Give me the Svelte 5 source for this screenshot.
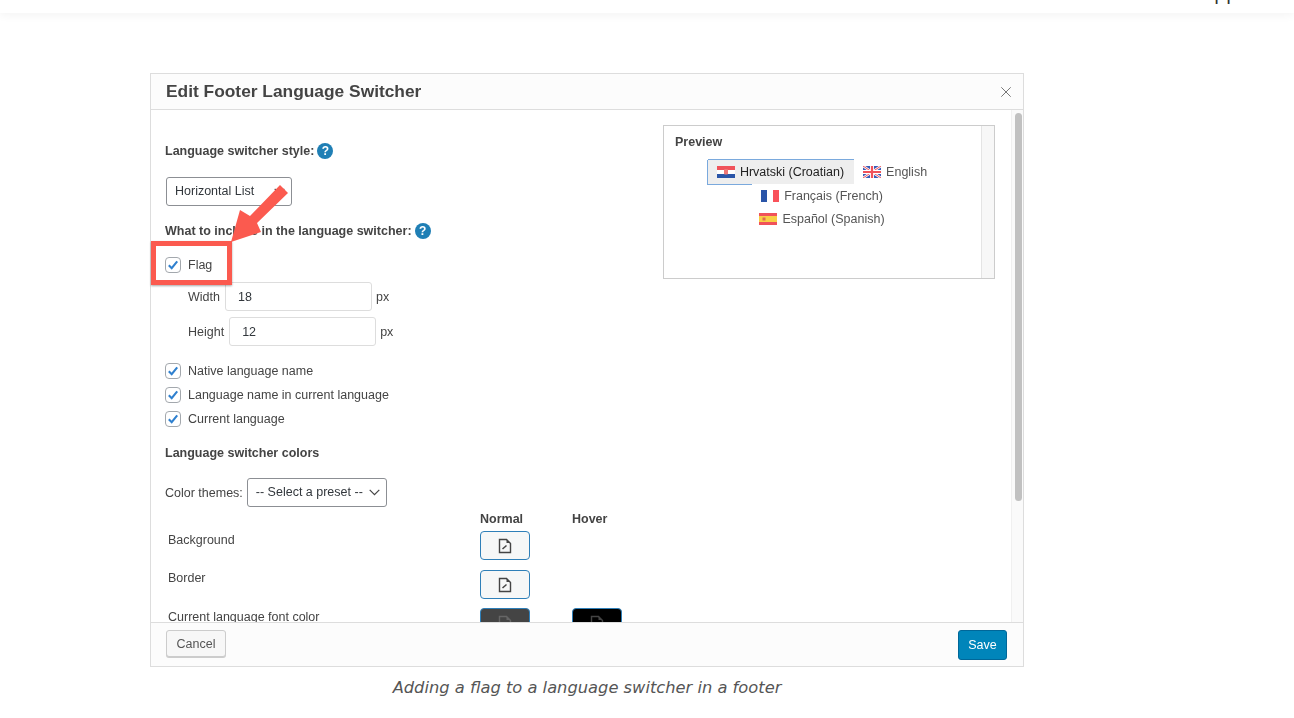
<script>
  const checks = ['Native language name', 'Language name in current language', 'Current language'];
</script>

{#snippet check()}
  <svg class="check" width="16" height="16" viewBox="0 0 16 16" aria-hidden="true">
    <rect x="0.5" y="0.5" width="15" height="15" rx="3.5" fill="#fff" stroke="#a3a8ad" />
    <path d="M3.8 8.2 L6.7 11.2 L12.2 4.4" fill="none" stroke="#2f80cf" stroke-width="2.1" />
  </svg>
{/snippet}

{#snippet help()}
  <span class="help">?</span>
{/snippet}

{#snippet chevron()}
  <svg class="chev" width="11" height="7" viewBox="0 0 11 7" aria-hidden="true">
    <path d="M0.7 0.8 L5.5 5.6 L10.3 0.8" fill="none" stroke="#444" stroke-width="1.2" />
  </svg>
{/snippet}

{#snippet doc(color)}
  <svg width="14" height="16" viewBox="0 0 14 16" aria-hidden="true">
    <path d="M1.5 1.5 H8.5 L12.5 5.5 V14.5 H1.5 Z" fill="none" stroke={color} stroke-width="1.4" />
    <path d="M8.5 1.5 V5 H12.5 Z" fill={color} />
    <path d="M4.5 11 L8.5 7.5" stroke={color} stroke-width="1.5" />
  </svg>
{/snippet}

<header class="topbar"><span class="clipped">Support</span></header>

<main class="page">
  <figure class="figure">
    <section class="modal">
      <div class="head">
        <h2>Edit Footer Language Switcher</h2>
        <svg class="close" width="10" height="10" viewBox="0 0 10 10" aria-hidden="true">
          <path d="M0.3 0.3 L9.7 9.7 M9.7 0.3 L0.3 9.7" stroke="#777" stroke-width="1" />
        </svg>
      </div>

      <div class="body">
        <div class="content">
          <div class="left">
            <div class="title first">Language switcher style: {@render help()}</div>
            <span class="sel-wrap style">
              <select class="sel"><option>Horizontal List</option></select>
              {@render chevron()}
            </span>
            <div class="title include">What to include in the language switcher: {@render help()}</div>

            <div class="check-row flag">{@render check()}<span>Flag</span></div>
            <div class="size-row"><span>Width</span><input value="18" /><span>px</span></div>
            <div class="size-row second"><span>Height</span><input value="12" /><span>px</span></div>

            <div class="checks">
              {#each checks as c}
                <div class="check-row">{@render check()}<span>{c}</span></div>
              {/each}
            </div>

            <div class="title colors">Language switcher colors</div>
            <div class="themes">
              <span>Color themes:</span>
              <span class="sel-wrap preset">
                <select class="sel"><option>-- Select a preset --</option></select>
                {@render chevron()}
              </span>
            </div>

            <div class="table">
              <span></span><b>Normal</b><b>Hover</b>
              <span class="name low">Background</span>
              <button class="swatch">{@render doc('#444')}</button><span></span>
              <span class="name">Border</span>
              <button class="swatch">{@render doc('#444')}</button><span></span>
              <span class="name low">Current language font color</span>
              <button class="swatch dark">{@render doc('#666')}</button>
              <button class="swatch black">{@render doc('#444')}</button>
            </div>
          </div>

          <aside class="preview">
            <div class="preview-main">
              <div class="preview-title">Preview</div>
              <div class="langs">
                <div class="lang-line first-line">
                  <span class="lang current">
                    <svg class="flag-i" width="18" height="12" viewBox="0 0 18 12" aria-hidden="true">
                      <rect width="18" height="4" fill="#f0525a" /><rect y="4" width="18" height="4" fill="#fff" /><rect y="8" width="18" height="4" fill="#2a55a8" />
                      <rect x="7" y="3" width="4" height="5.5" rx="1" fill="#e77" />
                    </svg>
                    Hrvatski (Croatian)
                  </span>
                  <span class="lang english">
                    <svg class="flag-i" width="18" height="12" viewBox="0 0 18 12" aria-hidden="true">
                      <rect width="18" height="12" fill="#3b5bb5" />
                      <path d="M0 0 L18 12 M18 0 L0 12" stroke="#fff" stroke-width="2.4" />
                      <path d="M0 0 L18 12 M18 0 L0 12" stroke="#f0525a" stroke-width="1" />
                      <path d="M9 0 V12 M0 6 H18" stroke="#fff" stroke-width="4" />
                      <path d="M9 0 V12 M0 6 H18" stroke="#f0525a" stroke-width="2.2" />
                    </svg>
                    English
                  </span>
                </div>
                <div class="lang-line">
                  <span class="lang">
                    <svg class="flag-i" width="18" height="12" viewBox="0 0 18 12" aria-hidden="true">
                      <rect width="6" height="12" fill="#2a55a8" /><rect x="6" width="6" height="12" fill="#fff" /><rect x="12" width="6" height="12" fill="#f9525a" />
                    </svg>
                    Français (French)
                  </span>
                </div>
                <div class="lang-line last-line">
                  <span class="lang">
                    <svg class="flag-i" width="18" height="12" viewBox="0 0 18 12" aria-hidden="true">
                      <rect width="18" height="12" fill="#f0525a" /><rect y="3" width="18" height="6" fill="#f8cf45" />
                      <rect x="3.5" y="4.5" width="3" height="3" fill="#e06a50" />
                    </svg>
                    Español (Spanish)
                  </span>
                </div>
              </div>
            </div>
            <div class="preview-side"></div>
          </aside>
        </div>

        <div class="track"><div class="thumb"></div></div>
      </div>

      <div class="foot">
        <button class="cancel">Cancel</button>
        <button class="save">Save</button>
      </div>

      <div class="callout" aria-hidden="true"></div>
      <svg class="arrow" width="70" height="70" viewBox="0 0 70 70" aria-hidden="true">
        <path d="M55 5 L63 13 L32 43 L36 52 L6 62 L15 30 L25 36 Z" fill="#fb5a4f" />
      </svg>
    </section>
    <figcaption>Adding a flag to a language switcher in a footer</figcaption>
  </figure>
</main>

<style>
  :global(body) {
    margin: 0;
    background: #fff;
    font-family: "Liberation Sans", Arial, sans-serif;
    overflow: hidden;
  }
  .topbar {
    height: 13px;
    overflow: hidden;
    box-shadow: 0 3px 8px rgba(0, 0, 0, 0.045);
    display: flex;
    justify-content: flex-end;
    padding-right: 29px;
  }
  .clipped {
    font: 19px/20px "DejaVu Sans", sans-serif;
    color: #333;
    margin-top: -17px;
    height: 24px;
  }
  .page { padding: 60px 0 0 150px; }
  .figure { margin: 0; width: 874px; }
  .modal {
    position: relative;
    box-sizing: border-box;
    width: 874px;
    height: 594px;
    border: 1px solid #ddd;
    display: flex;
    flex-direction: column;
    color: #444;
    font-size: 12.5px;
    filter: blur(0.4px);
  }
  .head {
    height: 35px;
    flex: none;
    background: #fcfcfc;
    border-bottom: 1px solid #ddd;
    display: flex;
    align-items: center;
    justify-content: space-between;
    padding: 0 12px 0 15px;
  }
  h2 { margin: 0; font-size: 17.35px; font-weight: 700; color: #444; }
  .body { flex: 1; min-height: 0; display: flex; overflow: hidden; background: #fff; }
  .content { flex: 1; display: flex; justify-content: space-between; padding: 15px 16px 0 14px; min-width: 0; }
  .left { width: 480px; flex: none; }
  .title { font-weight: 700; display: flex; align-items: center; gap: 3px; line-height: 16px; }
  .first { margin-top: 18px; }
  .help {
    width: 16px; height: 16px; border-radius: 50%;
    background: #1f7fb5; color: #fff; font-size: 12px; font-weight: 700;
    display: inline-flex; align-items: center; justify-content: center;
  }
  .sel-wrap { position: relative; display: block; }
  .chev { position: absolute; right: 7px; top: 11px; pointer-events: none; }
  .sel {
    appearance: none;
    display: block;
    width: 100%;
    font: 12.5px "Liberation Sans", sans-serif;
    color: #32373c;
    background-color: #fff;
    border: 1px solid #8c8f94;
    border-radius: 3px;
    height: 29px;
    box-sizing: border-box;
    padding: 0 4px 2px 8px;
  }
  .style { width: 126px; margin: 18px 0 0 1px; }
  .include { margin-top: 17px; }
  .check-row { display: flex; align-items: center; gap: 7px; height: 24px; }
  .check { flex: none; }
  .flag { margin-top: 14px; }
  .size-row { display: flex; align-items: center; gap: 5px; padding-left: 23px; margin-top: 5px; height: 29px; }
  .size-row.second { margin-top: 6px; }
  .size-row input {
    width: 147px; height: 29px; box-sizing: border-box;
    border: 1px solid #ddd; border-radius: 3px; padding: 0 12px;
    font: 12.5px "Liberation Sans", sans-serif; color: #32373c; outline: none;
  }
  .size-row span:last-child { margin-left: -1px; }
  .checks { margin-top: 13px; }
  .colors { margin-top: 14px; }
  .themes { display: flex; align-items: center; gap: 4px; margin-top: 17px; }
  .preset { width: 140px; }
  .table {
    display: grid;
    grid-template-columns: 312px 92px 92px;
    grid-template-rows: 23px 39px 38px 30px;
    padding-left: 3px;
    margin-top: 1px;
    height: 115px;
    overflow: hidden;
  }
  .table b { line-height: 22px; }
  .name { line-height: 16px; }
  .name.low { padding-top: 1px; }
  .swatch {
    width: 50px; height: 29px; padding: 0;
    background: #f6f7f7;
    border: 1px solid #2f7fb8;
    border-radius: 4px;
    display: flex; align-items: center; justify-content: center;
  }
  .dark { background: #444; }
  .black { background: #000; }

  .preview {
    box-sizing: border-box;
    width: 332px;
    height: 154px;
    border: 1px solid #ccc;
    display: flex;
    align-self: flex-start;
  }
  .preview-main { flex: 1; }
  .preview-title { font-weight: 700; padding: 8px 0 0 11px; line-height: 16px; }
  .preview-side { width: 12px; background: #f7f7f7; border-left: 1px solid #e4e4e4; }
  .langs { margin-top: 10px; padding-right: 1px; }
  .lang-line { display: flex; justify-content: center; height: 24px; align-items: center; }
  .first-line { margin-left: -1px; }
  .last-line { margin-top: -1px; }
  .lang { display: inline-flex; align-items: center; gap: 5px; padding: 0 8px; height: 24px; color: #555; white-space: nowrap; }
  .english { padding-left: 9px; }
  .flag-i { flex: none; }
  .current {
    position: relative;
    background: #eee;
    color: #222;
    box-shadow: -1px 0 0 #7aa9dd, 0 -1px 0 #7aa9dd;
    padding: 0 10px 0 9px;
    height: 24px;
  }
  .current::after {
    content: "";
    position: absolute;
    left: -1px;
    bottom: -1px;
    width: 45px;
    height: 1px;
    background: #7aa9dd;
  }
  .track { width: 12px; flex: none; background: #fafafa; padding: 3px 2px 0 3px; box-sizing: border-box; border-left: 1px solid #f0f0f0; }
  .thumb { width: 7px; height: 388px; background: #c1c1c1; border-radius: 4px; }

  .foot {
    height: 44px; flex: none;
    background: #fcfcfc;
    border-top: 1px solid #ddd;
    display: flex;
    justify-content: space-between;
    align-items: flex-start;
    padding: 7px 16px 0 15px;
    box-sizing: border-box;
  }
  .foot button { font: 12.5px "Liberation Sans", sans-serif; border-radius: 3px; padding: 0; }
  .cancel { width: 60px; height: 27px; background: #f7f7f7; border: 1px solid #ccc; color: #555; box-shadow: 0 1px 0 #ccc; }
  .save { width: 49px; height: 30px; background: #0085ba; border: 1px solid #006799; color: #fff; }

  .callout {
    position: absolute;
    left: 0; top: 167px;
    width: 81px; height: 44px;
    box-sizing: border-box;
    border: 5px solid #fb5a4f;
    box-shadow: 0 1px 2px rgba(0, 0, 0, 0.35);
  }
  .arrow { position: absolute; left: 74px; top: 106px; }

  figcaption {
    font: italic 16.3px "DejaVu Sans", Verdana, sans-serif;
    color: #555;
    text-align: center;
    margin-top: 11px;
  }
</style>
